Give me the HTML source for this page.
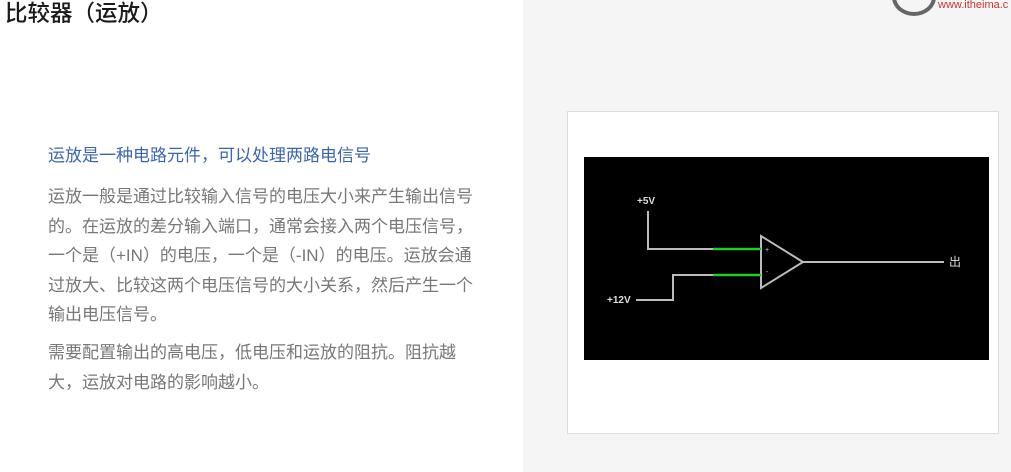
<!DOCTYPE html>
<html><head><meta charset="utf-8"><style>
body{margin:0;width:1011px;height:472px;overflow:hidden;background:#fff;font-family:"Liberation Sans","Noto Sans CJK SC",sans-serif;position:relative}
.right{position:absolute;left:523px;top:0;width:488px;height:472px;background:#f5f5f5}
.card{position:absolute;left:567px;top:111px;width:430px;height:321px;background:#fff;border:1px solid #ddd}
.title{position:absolute;left:5px;top:0px;font-size:22.5px;color:#1a1a1a;line-height:28px;font-weight:500}
.h{position:absolute;left:48px;top:144px;font-size:17px;color:#3a66b0;line-height:24px}
.p{position:absolute;left:48px;width:440px;font-size:17px;color:#777;line-height:29.5px}
.logo{position:absolute;left:892px;top:-22px;width:36px;height:30px;border:4px solid #666;border-radius:50%}
.url{position:absolute;left:938px;top:-1px;font-size:11px;color:#c33;white-space:nowrap}
</style></head><body>
<div class="right"></div>
<div class="logo"></div><div class="url">www.itheima.c</div>
<div class="title">比较器（运放）</div>
<div class="h">运放是一种电路元件，可以处理两路电信号</div>
<div class="p" style="top:182px">运放一般是通过比较输入信号的电压大小来产生输出信号的。在运放的差分输入端口，通常会接入两个电压信号，一个是（+IN）的电压，一个是（-IN）的电压。运放会通过放大、比较这两个电压信号的大小关系，然后产生一个输出电压信号。</div>
<div class="p" style="top:338px">需要配置输出的高电压，低电压和运放的阻抗。阻抗越大，运放对电路的影响越小。</div>
<div class="card"></div>
<svg style="position:absolute;left:0;top:0" width="1011" height="472">
<rect x="584" y="157" width="405" height="203" fill="#000"/>
<g stroke="#bbb" stroke-width="2" fill="none">
<polyline points="648,211 648,249 713,249"/>
<polyline points="636,300 673,300 673,275 713,275"/>
<polygon points="761,236 761,288 803,262"/>
<line x1="803" y1="262" x2="944" y2="262"/>
</g>
<g stroke="#22cc22" stroke-width="2.5">
<line x1="713" y1="249" x2="761" y2="249"/><line x1="713" y1="275" x2="761" y2="275"/>
</g>
<g fill="#ddd" font-size="10" font-weight="bold" font-family="Liberation Sans,Noto Sans CJK SC,sans-serif">
<text x="637" y="204">+5V</text><text x="607" y="303">+12V</text>
<text x="949" y="266" font-size="12" font-weight="normal">出</text>
<text x="765" y="252" font-size="7" font-weight="normal">+</text><text x="766" y="274" font-size="7" font-weight="normal">-</text>
</g>
</svg>
</body></html>
